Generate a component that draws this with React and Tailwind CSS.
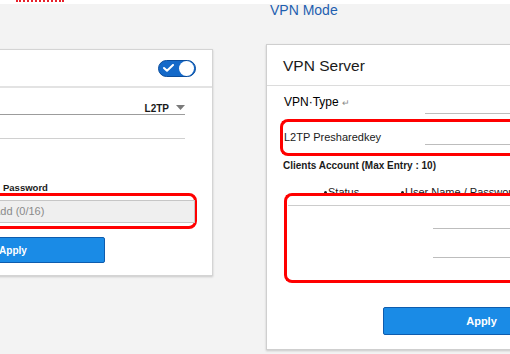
export default function App() {
  return (
    <div className="w-[510px] h-[354px] overflow-hidden bg-[#f3f3f3] font-['Liberation_Sans',Arial,sans-serif] text-[#1a1a1a]">
      {/* top strip */}
      <div className="h-[18px] flex items-start bg-[linear-gradient(to_bottom,#ffffff_4px,#f3f3f3_4px)]">
        <span className="ml-[16px] w-[48px] h-[2px] border-b-2 border-dotted border-[#e8202a]" />
        <span className="ml-[206px] mt-[2px] text-[14px] leading-[16px] text-[#1f5fb0]">VPN Mode</span>
      </div>

      <div className="flex items-start">
        {/* left card */}
        <div className="ml-[-90px] mt-[31px] w-[303px] h-[227px] shrink-0 bg-white border border-[#d4d4d4] shadow-[0_1px_2px_rgba(0,0,0,0.18)]">
          <div className="h-[38px] border-b-2 border-[#e3e3e3] flex items-center justify-end pr-[16px]">
            <div className="w-[38px] h-[17px] rounded-full bg-[#1469c9] border border-[#0b4d9c] flex items-center justify-between pl-[4px] pr-[1px]">
              <svg width="11" height="8" viewBox="0 0 11 8" fill="none">
                <path d="M1 4 L4 6.8 L10 1" stroke="#fff" strokeWidth="2" strokeLinecap="round" strokeLinejoin="round" />
              </svg>
              <div className="w-[15px] h-[15px] rounded-full bg-white" />
            </div>
          </div>
          <div className="pl-[10px]">
            <div className="mt-[10px] mr-[27px] h-[17px] border-b border-[#9c9c9c] flex items-end justify-end gap-[7px]">
              <span className="text-[10px] leading-[10px] font-bold">L2TP</span>
              <svg width="9" height="5" viewBox="0 0 9 5" className="mb-[4px]">
                <path d="M0 0 L9 0 L4.5 5 Z" fill="#7a7a7a" />
              </svg>
            </div>
            <div className="mr-[27px] h-[24px] border-b border-[#d0d0d0]" />
            <div className="mt-[43px] ml-[82px] text-[9.5px] leading-[12px] font-bold">Password</div>
            <div className="mt-[-1px] mr-[15px] h-[36px] border-[3px] border-[#ff0000] rounded-[8px] pt-[4px]">
              <div className="h-[23px] mr-[-1px] bg-[#efefef] border border-[#c6c6c6] pl-[68px] flex items-center text-[11px] text-[#8a8a8a]">
                Add (0/16)
              </div>
            </div>
            <button className="mt-[8px] w-[184px] h-[26px] rounded-[2px] bg-[#1a8be6] border border-[#0e5cae] text-white text-[10px] font-bold flex items-center justify-center">
              Apply
            </button>
          </div>
        </div>

        {/* right card */}
        <div className="ml-[53px] mt-[26px] w-[330px] h-[306px] shrink-0 bg-white border border-[#cfcfcf] shadow-[0_1px_2px_rgba(0,0,0,0.18)]">
          <div className="h-[41px] border-b border-[#dcdcdc] flex items-center pl-[16px] pt-[2px]">
            <span className="text-[15.5px] leading-[18px]">VPN Server</span>
          </div>
          <div className="h-[28px] flex items-end pl-[17px]">
            <span className="w-[141px] mb-[4px] text-[12px] leading-[14px] text-black">
              VPN·Type <span className="text-[9px] text-[#8a8a8a]">↵</span>
            </span>
            <div className="flex-1 h-px bg-[#bdbdbd]" />
          </div>
          <div className="mt-[5px] ml-[13px] h-[37px] border-[3px] border-r-0 border-[#ff0000] rounded-l-[8px]">
            <div className="h-[23px] flex items-end pl-[1px]">
              <span className="w-[141px] mb-[1px] text-[11px] leading-[13px]">L2TP Presharedkey</span>
              <div className="flex-1 h-px bg-[#bdbdbd]" />
            </div>
          </div>
          <div className="mt-[4px] ml-[16px] text-[10px] leading-[12px] font-bold">Clients Account (Max Entry : 10)</div>
          <div className="mt-[14px] ml-[57px] flex items-center text-[11px] leading-[13px]">
            <span className="w-[77px] flex items-center gap-[1px]">
              <span className="w-[3px] h-[3px] rounded-full bg-[#1a1a1a]" />
              Status
            </span>
            <span className="flex items-center gap-[1px]">
              <span className="w-[3px] h-[3px] rounded-full bg-[#1a1a1a]" />
              User Name / Password
            </span>
          </div>
          <div className="relative mt-[-6px] ml-[17px] h-[90px] bg-white border-[3px] border-r-0 border-[#ff0000] rounded-l-[8px]">
            <div className="mt-[9px] ml-[1px] border-t border-[#cccccc]" />
            <div className="mt-[22px] ml-[146px] border-t border-[#bdbdbd]" />
            <div className="mt-[28px] ml-[146px] border-t border-[#bdbdbd]" />
          </div>
          <button className="mt-[24px] ml-[116px] w-[197px] h-[28px] rounded-[2px] bg-[#1a8be6] border border-[#0e5cae] text-white text-[11px] font-bold flex items-center justify-center">
            Apply
          </button>
        </div>
      </div>
    </div>
  );
}
